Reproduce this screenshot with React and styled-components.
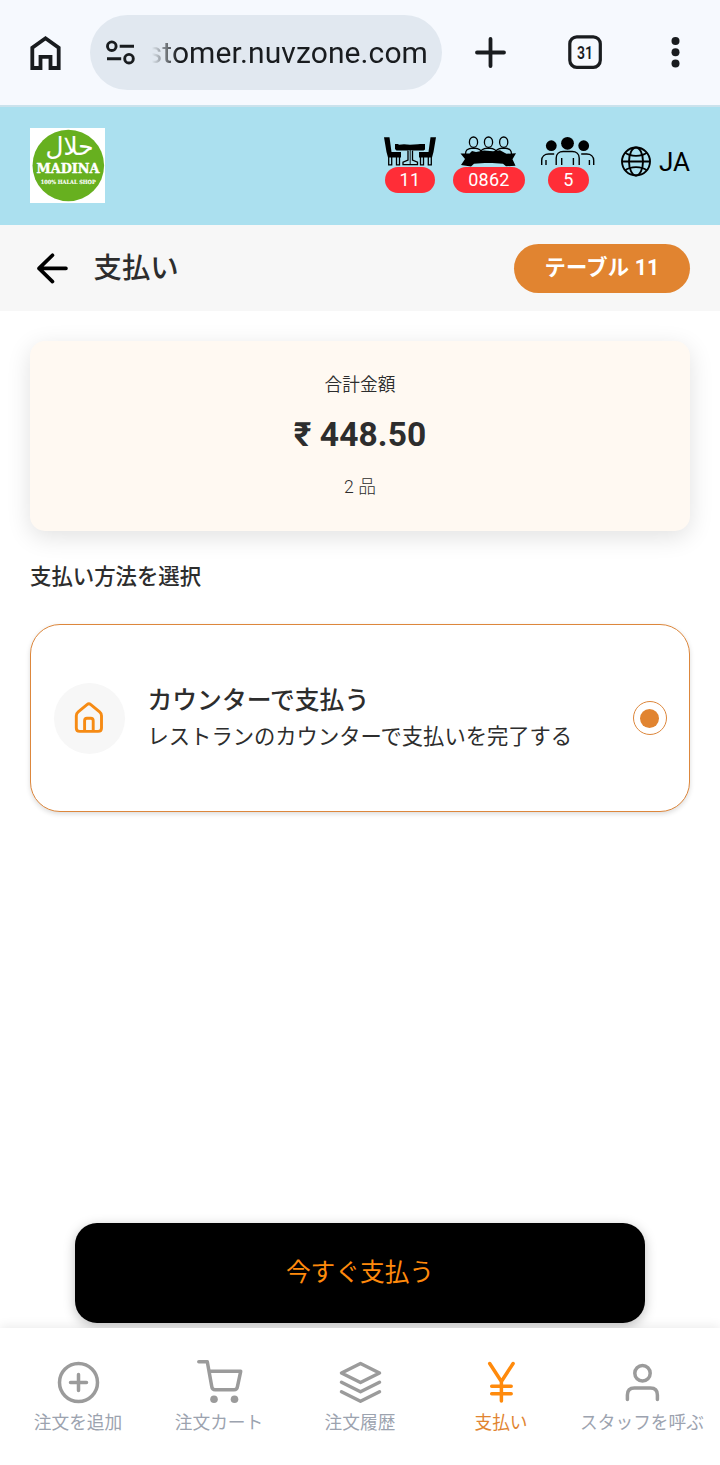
import React, { useState } from "react";
import styled, { createGlobalStyle } from "styled-components";

const GlobalStyle = createGlobalStyle`
  * {
    box-sizing: border-box;
  }
  body {
    margin: 0;
    background: #ffffff;
    font-family: Roboto, "Noto Sans CJK JP", sans-serif;
    color: #2d2d2d;
  }
  p, h1, h2, h3 {
    margin: 0;
  }
  button {
    font-family: inherit;
    border: none;
    padding: 0;
    background: none;
    cursor: pointer;
  }
  svg {
    display: block;
    flex-shrink: 0;
  }
`;

const Page = styled.div`
  width: 720px;
  height: 1465px;
  display: flex;
  flex-direction: column;
  overflow: hidden;
`;

const BrowserBar = styled.div`
  height: 107px;
  padding: 0 23px 0 24px;
  display: flex;
  align-items: center;
  background: #f6f9fe;
  border-bottom: 2px solid #cbe2ec;
  color: #191c1f;
`;

const AddressBar = styled.div`
  width: 352px;
  height: 75px;
  margin: 0 24px 0 23px;
  padding-left: 14px;
  display: flex;
  align-items: center;
  gap: 14px;
  border-radius: 38px;
  background: #e1e8f0;
`;

const Address = styled.div`
  width: 276px;
  display: flex;
  justify-content: flex-end;
  font-size: 30px;
  line-height: 40px;
  letter-spacing: 0.1px;
  white-space: nowrap;
  mask-image: linear-gradient(to right, transparent 0, #000 26px);
`;

const BarActions = styled.div`
  flex: 1;
  padding-bottom: 1px;
  display: flex;
  align-items: center;
  justify-content: space-between;
`;

const Header = styled.header`
  height: 118px;
  padding: 0 30px 1px;
  display: flex;
  align-items: center;
  background: #abe0ef;
`;

const Stats = styled.div`
  margin-left: auto;
  padding-bottom: 3px;
  display: flex;
  gap: 17px;
`;

const Stat = styled.div`
  width: ${(props) => props.$width}px;
  display: flex;
  flex-direction: column;
  align-items: center;
`;

const Badge = styled.span`
  height: 26px;
  padding: 0 15px;
  border-radius: 13px;
  background: #ff2d37;
  color: #ffffff;
  font-size: 18px;
  line-height: 26px;
  letter-spacing: 0.3px;
`;

const Language = styled.button`
  margin-left: 26px;
  padding-bottom: 8px;
  display: flex;
  align-items: center;
  gap: 7px;
  font-size: 26px;
  line-height: 30px;
  color: #000000;
`;

const TitleBar = styled.div`
  height: 86px;
  padding: 0 30px 0 36px;
  display: flex;
  align-items: center;
  background: #f7f7f7;
`;

const Title = styled.h1`
  margin-left: 25.5px;
  padding-top: 2px;
  font-size: 28.4px;
  line-height: 40px;
  font-weight: 500;
`;

const TableTag = styled.div`
  width: 176px;
  height: 49px;
  margin-left: auto;
  border-radius: 25px;
  background: #e18430;
  color: #ffffff;
  font-size: 21.3px;
  font-weight: 700;
  line-height: 47px;
  letter-spacing: 0.2px;
  text-align: center;
`;

const Content = styled.main`
  flex: 1;
  padding: 30px 30px 0;
  display: flex;
  flex-direction: column;
`;

const TotalCard = styled.section`
  height: 190px;
  padding-top: 31px;
  border-radius: 15px;
  background: #fff9f2;
  box-shadow: 0 6px 24px rgba(0, 0, 0, 0.12);
  text-align: center;
`;

const TotalText = styled.p`
  font-size: 17.7px;
  font-weight: ${(props) => (props.$light ? 300 : 350)};
  line-height: 26px;
`;

const TotalAmount = styled.p`
  margin: 12px 0 14px;
  font-size: 33.5px;
  font-weight: 700;
  line-height: 50px;
  letter-spacing: 0.1px;
`;

const SectionTitle = styled.h2`
  margin: 30px 0 32px;
  font-size: 21.4px;
  font-weight: 500;
  line-height: 31px;
`;

const Option = styled.button`
  height: 188px;
  padding: 0 22px 0 23px;
  display: flex;
  align-items: center;
  border: 1px solid #dd873c;
  border-radius: 30px;
  background: #ffffff;
  box-shadow: 0 2px 5px rgba(0, 0, 0, 0.14);
  color: inherit;
  text-align: left;
`;

const OptionIcon = styled.span`
  width: 71px;
  height: 71px;
  display: grid;
  place-items: center;
  border-radius: 50%;
  background: #f7f7f7;
`;

const OptionText = styled.div`
  flex: 1;
  margin: 2px 0 0 22.5px;
`;

const OptionName = styled.h3`
  font-size: 24.8px;
  font-weight: 500;
  line-height: 36px;
`;

const OptionNote = styled.p`
  font-size: 21.3px;
  line-height: 36px;
`;

const Radio = styled.span`
  width: 34px;
  height: 34px;
  display: grid;
  place-items: center;
  border: 1px solid #dd873c;
  border-radius: 50%;

  &::after {
    content: "";
    width: 19px;
    height: 19px;
    margin-right: 1px;
    border-radius: 50%;
    background: ${(props) => (props.$checked ? "#e18430" : "transparent")};
  }
`;

const PayButton = styled.button`
  width: 570px;
  height: 100px;
  margin: auto auto 5px;
  padding-bottom: 6px;
  border-radius: 22px;
  background: #000000;
  box-shadow: 0 3px 12px rgba(0, 0, 0, 0.25);
  color: #ff8a0c;
  font-size: 24.7px;
`;

const BottomNav = styled.nav`
  height: 137px;
  padding: 0 7.5px;
  display: flex;
  background: #ffffff;
  box-shadow: 0 -2px 10px rgba(0, 0, 0, 0.08);
  z-index: 1;
`;

const NavItem = styled.button`
  width: 141px;
  padding-top: 29px;
  display: flex;
  flex-direction: column;
  align-items: center;
  gap: 3px;
  color: ${(props) => (props.$active ? "#ff8a0c" : "#9b9b9b")};
`;

const NavLabel = styled.span`
  font-size: 17.7px;
  line-height: 26px;
  white-space: nowrap;
  color: ${(props) => (props.$active ? "#e18430" : "#9ca3af")};
`;

const BrowserHomeIcon = () => (
  <svg width="43" height="44" fill="none" stroke="currentColor" strokeWidth="3.8">
    <path d="M8.3 37V16.700L21.500 7.300l13.200 9.400V37h-8.200V25.900h-10V37z" />
  </svg>
);

const TuneIcon = () => (
  <svg width="34" height="34" fill="none" stroke="currentColor" strokeWidth="2.9">
    <circle cx="7.8" cy="10.2" r="4.3" />
    <path d="M15.7 10.200H30M3 22.700H17.200" />
    <circle cx="25" cy="22.7" r="4.3" />
  </svg>
);

const PlusIcon = () => (
  <svg width="48" height="48" stroke="currentColor" strokeWidth="3.8" strokeLinecap="round">
    <path d="M11 24.500h27M24.500 11v27" />
  </svg>
);

const TabsIcon = () => (
  <svg width="44" height="44" fill="none">
    <rect x="7.8" y="6.8" width="30.5" height="30.5" rx="7" stroke="currentColor" strokeWidth="3.2" />
    <text
      x="23"
      y="28.5"
      textAnchor="middle"
      textLength="16"
      lengthAdjust="spacingAndGlyphs"
      fontSize="18"
      fontWeight="600"
      fill="currentColor"
    >
      31
    </text>
  </svg>
);

const DotsIcon = () => (
  <svg width="44" height="44" fill="currentColor">
    <circle cx="22.5" cy="11" r="4" />
    <circle cx="22.5" cy="22.3" r="4" />
    <circle cx="22.5" cy="33.5" r="4" />
  </svg>
);

const Logo = () => (
  <svg width="75" height="75" viewBox="0 0 75 75">
    <rect width="75" height="75" fill="#fff" />
    <circle cx="38.3" cy="37.5" r="35.8" fill="#67b01f" />
    <g fill="#fff" stroke="#fff" textAnchor="middle">
      <text x="39.500" y="27" fontFamily="DejaVu Sans" fontSize="25" strokeWidth="0.1" textLength="48" lengthAdjust="spacingAndGlyphs">حلال</text>
      <text x="38" y="44.500" fontFamily="DejaVu Serif" fontWeight="700" fontSize="12.500" strokeWidth="0.4" textLength="63" lengthAdjust="spacingAndGlyphs">MADINA</text>
      <text x="38.300" y="56.300" fontFamily="DejaVu Serif" fontWeight="700" fontSize="5.600" strokeWidth="0.1" textLength="55" lengthAdjust="spacingAndGlyphs">100% HALAL SHOP</text>
    </g>
  </svg>
);

const TableIcon = () => (
  <svg width="52" height="31" viewBox="0 0 52 31">
    <g id="chair">
      <path d="M0 1.300h5.500l2 14.700H17v5.500H4L2.500 16z" />
      <path d="M4.700 21v7.800h3V21M12.500 21v7.800h3V21" fill="none" stroke="#000" strokeWidth="1.3" />
    </g>
    <use href="#chair" transform="translate(52 0) scale(-1 1)" />
    <path d="M11 8h3l1 .7 5-.4 6 .5 8-.5 2-.3h5v5.500l-1.500 1H12.500L11 13z" />
    <path d="M24 14.500v9.500l-5 2.200v2.500h14.500v-2.500l-5-2.200v-9.500" fill="#abe0ef" stroke="#000" strokeWidth="1.3" />
    <path d="M26.200 14v14.500" stroke="#000" strokeWidth="0.9" />
  </svg>
);

const GroupIcon = () => (
  <svg width="57" height="31" viewBox="0 0 57 31">
    <g fill="#abe0ef" stroke="#000" strokeWidth="1.3">
      <path d="M5.500 18c0-4 1.500-5.500 8-6 6.500.5 8 2 8 6M35.500 18c0-4 1.500-5.500 8-6 6.500.5 8 2 8 6" />
      <path d="M20.500 18c0-4 1.500-5.500 8-6 6.500.5 8 2 8 6" />
      <ellipse cx="13.5" cy="6.2" rx="4.1" ry="5.2" />
      <ellipse cx="28.5" cy="6.2" rx="4.1" ry="5.2" />
      <ellipse cx="43.7" cy="6.2" rx="4.1" ry="5.2" />
    </g>
    <path d="M.5 17.500h9l2.500-2.500 4 1 8-1.500 9 .8 7-1 5 2.700 1.500.8 9.500-.5-3.500 6 3 6.500-9.500.5-3-2.500c-9-1-20-1-29 0L11 30.500 1 29l4-6z" />
  </svg>
);

const PeopleIcon = () => (
  <svg width="54" height="31" viewBox="0 0 54 31">
    <circle cx="10.3" cy="9.7" r="5.4" />
    <circle cx="42.7" cy="9.7" r="5.4" />
    <circle cx="26.5" cy="7.3" r="6.4" />
    <g fill="none" stroke="#000" strokeWidth="1.4">
      <path d="M.7 29v-4.500c0-4 3-6.500 7-6.500h5.500M5 29v-5M52.700 29v-4.500c0-4-3-6.500-7-6.500h-5.500M48.400 29v-5" />
      <path d="M15.200 29v-7c0-4 3-6.500 7-6.500h9c4 0 7 2.500 7 6.500v7M20.700 29v-7M32.400 29v-7" />
    </g>
  </svg>
);

const GlobeIcon = () => (
  <svg width="31" height="31" viewBox="0 0 31 31" fill="none" stroke="#000" strokeWidth="1.9">
    <circle cx="15" cy="15.5" r="14" />
    <ellipse cx="15" cy="15.5" rx="7" ry="14" />
    <path d="M1 15.500h28M4 6.500c5.500 4.500 16.500 4.500 22 0M4 24.500c5.500-4.500 16.500-4.500 22 0" />
  </svg>
);

const BackIcon = () => (
  <svg width="32" height="32" fill="none" stroke="#000" strokeWidth="3.6" strokeLinecap="round" strokeLinejoin="round">
    <path d="M30 16.400H3M16.500 3.200L3 16.400l13.500 13.200" />
  </svg>
);

const CounterIcon = () => (
  <svg width="31" height="33" fill="none" stroke="#f68b14" strokeWidth="2.9" strokeLinejoin="round">
    <path d="M2.300 13.700c0-2 .4-2.700 1.900-3.900l8.800-7.200c1.400-1.100 2.400-1.100 3.800 0l8.800 7.200c1.500 1.200 1.900 1.900 1.900 3.900v12.300c0 2.400-1.200 3.400-3.400 3.400H5.700c-2.200 0-3.400-1-3.400-3.400z" />
    <path d="M10.600 29.400V18.800c0-1.700.8-2.500 2.400-2.500h3.800c1.600 0 2.400.8 2.400 2.500v10.600" />
  </svg>
);

const NavSvg = ({ children }) => (
  <svg
    width="50"
    height="50"
    fill="none"
    stroke="currentColor"
    strokeWidth="3.5"
    strokeLinecap="round"
    strokeLinejoin="round"
  >
    {children}
  </svg>
);

const AddIcon = () => (
  <NavSvg>
    <circle cx="25.5" cy="25.5" r="19" />
    <path d="M17.500 25.500h16M25.500 17.500v16" />
  </NavSvg>
);

const CartIcon = () => (
  <NavSvg>
    <path d="M4.800 4.800h8.500l4.500 25c.3 2 1.300 3 3.300 3h19c2 0 3-1 3.300-3l3.300-15.500H15" />
    <circle cx="20" cy="42.3" r="3.8" fill="currentColor" stroke="none" />
    <circle cx="40.5" cy="42.3" r="3.8" fill="currentColor" stroke="none" />
  </NavSvg>
);

const LayersIcon = () => (
  <NavSvg>
    <path d="M25.500 6.500L6.500 16l19 9.500 19-9.500z" />
    <path d="M6.500 25.300l19 9.500 19-9.500M6.500 34.800l19 9.500 19-9.500" />
  </NavSvg>
);

const YenIcon = () => (
  <NavSvg>
    <path d="M13.700 6.500l11.700 18 11.700-18M25.400 24.500V44M15.700 29.300h19.500M15.700 36.700h19.500" />
  </NavSvg>
);

const StaffIcon = () => (
  <NavSvg>
    <circle cx="25.5" cy="16.3" r="7.7" />
    <path d="M10.400 42.500v-4.500c0-4.500 2.500-7 7-7h16c4.500 0 7 2.500 7 7v4.500" />
  </NavSvg>
);

const stats = [
  { id: "table", icon: <TableIcon />, value: "11", width: 52 },
  { id: "group", icon: <GroupIcon />, value: "0862", width: 72 },
  { id: "people", icon: <PeopleIcon />, value: "5", width: 53 },
];

const navItems = [
  { id: "add", label: "注文を追加", icon: <AddIcon /> },
  { id: "cart", label: "注文カート", icon: <CartIcon /> },
  { id: "history", label: "注文履歴", icon: <LayersIcon /> },
  { id: "payment", label: "支払い", icon: <YenIcon /> },
  { id: "staff", label: "スタッフを呼ぶ", icon: <StaffIcon /> },
];

export default function App() {
  const [method, setMethod] = useState("counter");
  const [active, setActive] = useState("payment");

  return (
    <Page lang="ja">
      <GlobalStyle />
      <BrowserBar>
        <BrowserHomeIcon />
        <AddressBar>
          <TuneIcon />
          <Address>stomer.nuvzone.com</Address>
        </AddressBar>
        <BarActions>
          <PlusIcon />
          <TabsIcon />
          <DotsIcon />
        </BarActions>
      </BrowserBar>
      <Header>
        <Logo />
        <Stats>
          {stats.map((stat) => (
            <Stat key={stat.id} $width={stat.width}>
              {stat.icon}
              <Badge>{stat.value}</Badge>
            </Stat>
          ))}
        </Stats>
        <Language>
          <GlobeIcon />
          JA
        </Language>
      </Header>
      <TitleBar>
        <BackIcon />
        <Title>支払い</Title>
        <TableTag>テーブル 11</TableTag>
      </TitleBar>
      <Content>
        <TotalCard>
          <TotalText>合計金額</TotalText>
          <TotalAmount>₹ 448.50</TotalAmount>
          <TotalText $light>2 品</TotalText>
        </TotalCard>
        <SectionTitle>支払い方法を選択</SectionTitle>
        <Option onClick={() => setMethod("counter")}>
          <OptionIcon>
            <CounterIcon />
          </OptionIcon>
          <OptionText>
            <OptionName>カウンターで支払う</OptionName>
            <OptionNote>レストランのカウンターで支払いを完了する</OptionNote>
          </OptionText>
          <Radio $checked={method === "counter"} />
        </Option>
        <PayButton>今すぐ支払う</PayButton>
      </Content>
      <BottomNav>
        {navItems.map((item) => (
          <NavItem key={item.id} $active={item.id === active} onClick={() => setActive(item.id)}>
            {item.icon}
            <NavLabel $active={item.id === active}>{item.label}</NavLabel>
          </NavItem>
        ))}
      </BottomNav>
    </Page>
  );
}
